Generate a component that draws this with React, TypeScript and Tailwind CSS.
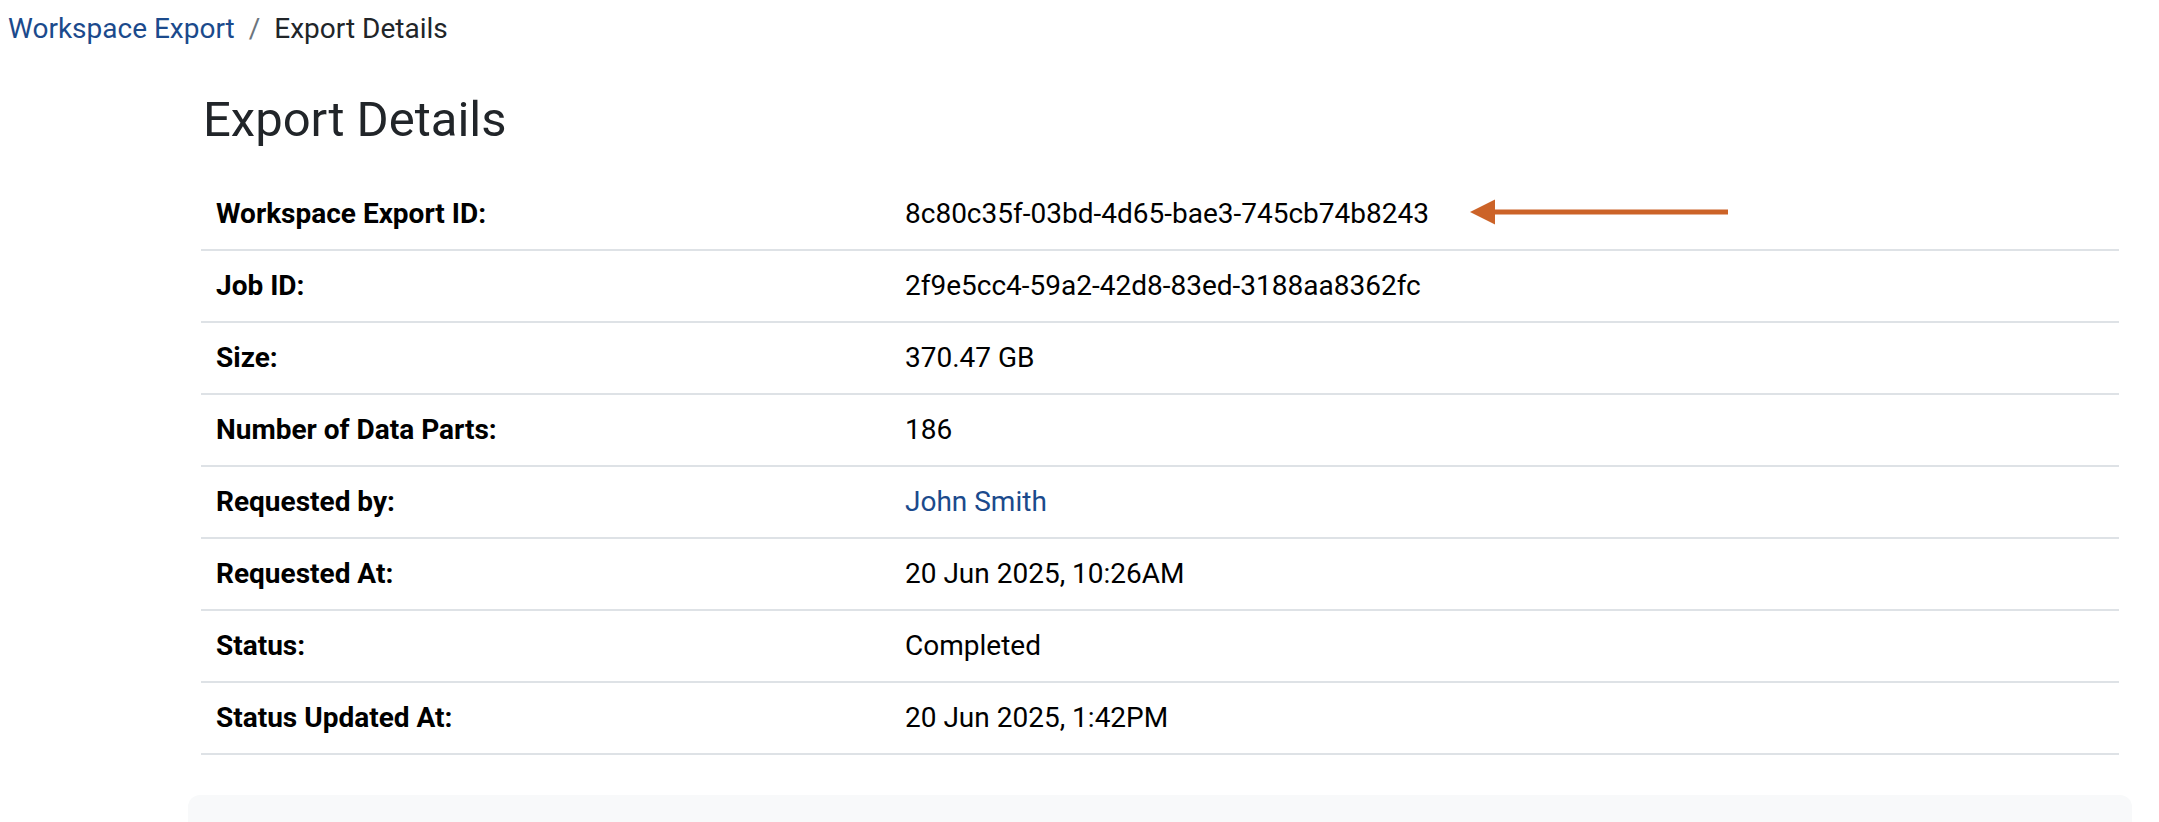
import React from 'react';

const rows: { label: string; value: string; link?: boolean; arrow?: boolean }[] = [
  { label: 'Workspace Export ID:', value: '8c80c35f-03bd-4d65-bae3-745cb74b8243', arrow: true },
  { label: 'Job ID:', value: '2f9e5cc4-59a2-42d8-83ed-3188aa8362fc' },
  { label: 'Size:', value: '370.47 GB' },
  { label: 'Number of Data Parts:', value: '186' },
  { label: 'Requested by:', value: 'John Smith', link: true },
  { label: 'Requested At:', value: '20 Jun 2025, 10:26AM' },
  { label: 'Status:', value: 'Completed' },
  { label: 'Status Updated At:', value: '20 Jun 2025, 1:42PM' },
];

export default function App() {
  return (
    <div className="min-h-screen bg-white font-['Roboto','Liberation_Sans',sans-serif] text-[#212529]">
      <nav className="pl-2 pt-[8px] text-[28px] leading-[42px] flex items-center">
        <a className="text-[#1b4a8c]">Workspace Export</a>
        <span className="px-[14px] text-[#6c757d]">/</span>
        <span>Export Details</span>
      </nav>

      <div className="pl-[188px] pr-[27px]">
        <h1 className="ml-[15px] mt-[41px] text-[49px] leading-[58px] font-normal">Export Details</h1>

        <div className="mx-[13px] mt-[30px]">
          {rows.map(row => (
            <div key={row.label} className="relative flex items-center h-[72px] border-b-2 border-[#dee2e6] text-[28px]">
              <div className="w-[688px] pl-[15px] font-bold text-black">{row.label}</div>
              <div className={`pl-[16px] ${row.link ? 'text-[#1b4a8c]' : 'text-black'}`}>{row.value}</div>
              {row.arrow && (
                <svg
                  className="absolute left-[1269px] top-[20px]"
                  width="260"
                  height="26"
                  viewBox="0 0 260 26"
                >
                  <line x1="22" y1="13" x2="258" y2="13" stroke="#cc6328" strokeWidth="5" />
                  <polygon points="0,13 25,0.5 25,25.5" fill="#cc6328" />
                </svg>
              )}
            </div>
          ))}
        </div>

        <div className="mt-[40px] h-[220px] rounded-xl bg-[#f8f9fa]" />
      </div>
    </div>
  );
}
